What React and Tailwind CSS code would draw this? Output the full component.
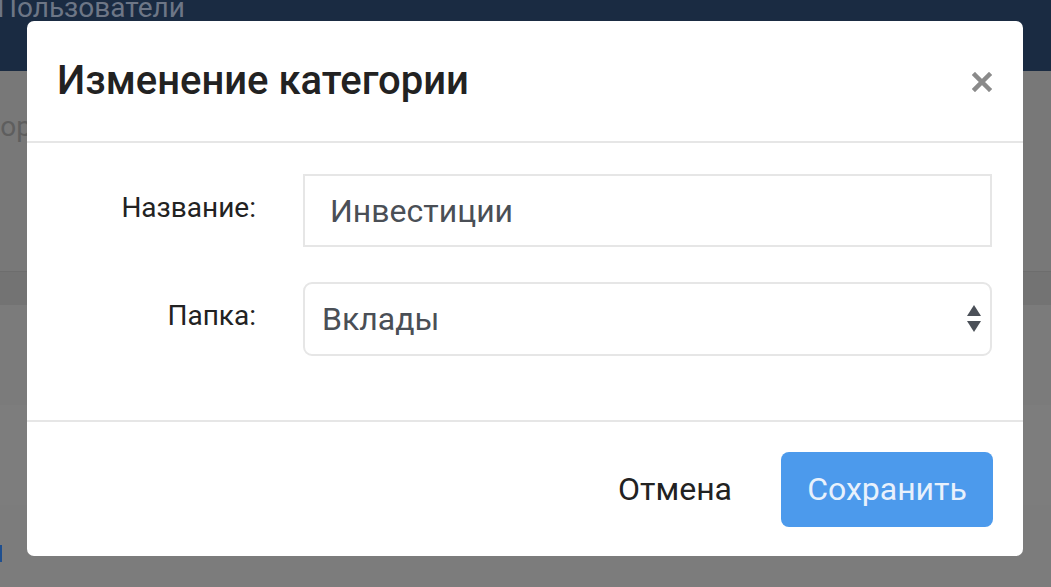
import React from "react";

export default function App() {
  return (
    <div
      className="relative w-[1051px] h-[587px] overflow-hidden bg-[#7c7c7c]"
      style={{ fontFamily: "Roboto, 'Noto Sans', Arial, sans-serif" }}
    >
      {/* background page (dimmed) */}
      <div className="flex flex-col">
        <div className="h-[71px] bg-[#1a2b42] overflow-hidden">
          <div className="-mt-[12px] -ml-[3px] text-[28px] leading-[40px] text-[#6d7686]">Пользователи</div>
        </div>
        <div className="h-[200px] bg-[#787878] pt-[36px] text-[28px] leading-[40px] text-[#5e5e5e] -ml-[18px]">Сортировка</div>
        <div className="h-[34px] bg-[#737373] border-t border-[#6d6d6d]"></div>
        <div className="h-[100px] bg-[#7b7b7b]"></div>
        <div className="h-[100px] bg-[#7d7d7d]"></div>
        <div className="flex-1 bg-[#7c7c7c] pt-[40px]">
          <div className="w-[2px] h-[17px] bg-[#1f4f8f]"></div>
        </div>
      </div>

      {/* modal */}
      <div className="absolute left-[27px] top-[21px] w-[996px] h-[535px] bg-white rounded-[7px] flex flex-col">
        <div className="h-[122px] shrink-0 border-b-2 border-[#e6e6e6] flex items-center justify-between pl-[30px] pr-[31px]">
          <div className="text-[40px] font-medium text-[#222222] leading-none">Изменение категории</div>
          <svg width="20" height="20" viewBox="0 0 20 20" className="mt-[1px]">
            <path d="M3 3 L17 17 M17 3 L3 17" stroke="#8a8a8a" strokeWidth="4.5" strokeLinecap="square" />
          </svg>
        </div>

        <div className="h-[279px] shrink-0 border-b-2 border-[#e6e6e6] px-[31px] pt-[31px] flex flex-col gap-[35px]">
          <div className="flex items-center">
            <div className="w-[198px] text-right text-[28px] text-[#222222] -mt-[6px]">Название:</div>
            <div className="ml-[47px] w-[689px] h-[73px] border-2 border-[#e6e6e6] flex items-center pl-[25px] text-[32px] text-[#4a4f56]">
              Инвестиции
            </div>
          </div>
          <div className="flex items-center">
            <div className="w-[198px] text-right text-[28px] text-[#222222] -mt-[6px]">Папка:</div>
            <div className="ml-[47px] w-[689px] h-[74px] border-2 border-[#e6e6e6] rounded-[9px] flex items-center justify-between pl-[17px] pr-[8px] text-[32px] text-[#4a4f56]">
              <span>Вклады</span>
              <svg width="16" height="30" viewBox="0 0 16 30">
                <path d="M8 1 L15 12 L1 12 Z" fill="#4b5058" />
                <path d="M1 17 L15 17 L8 28 Z" fill="#4b5058" />
              </svg>
            </div>
          </div>
        </div>

        <div className="flex-1 flex items-center justify-end pr-[30px]">
          <button className="px-[26px] text-[32px] text-[#222222] mr-[23px]">Отмена</button>
          <button className="w-[212px] h-[75px] rounded-[8px] bg-[#4c9aec] text-[32px] text-[#e8f1fc]">Сохранить</button>
        </div>
      </div>
    </div>
  );
}
